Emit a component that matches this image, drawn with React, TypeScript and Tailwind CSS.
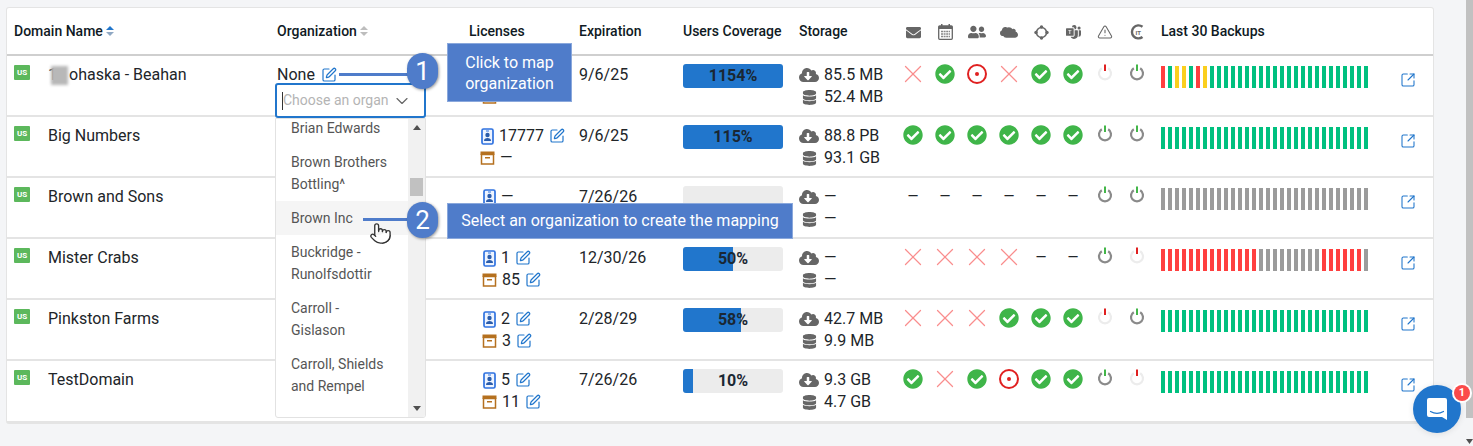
import type { ReactNode } from "react";
import { ChevronDown, Pointer, SquareArrowOutUpRight, SquarePen, TriangleAlert, X } from "lucide-react";
import { BsMicrosoftTeams } from "react-icons/bs";
import { FaCheckCircle, FaCloud, FaCloudDownloadAlt, FaDatabase, FaEnvelope, FaUserFriends } from "react-icons/fa";

const COLS = "grid grid-cols-[263px_193px_109px_104px_116px_98px_repeat(8,32px)_8px_240px_32px]";

type Status = "x" | "ok" | "target" | "-" | "on" | "off";

type Row = {
  name: ReactNode;
  org?: boolean;
  seats?: string;
  archive?: string;
  seatsEdit?: boolean;
  archiveEdit?: boolean;
  expires: string;
  coverage: number;
  coverageLabel?: string;
  down: string;
  stored: string;
  status: Status[];
  bars: string;
};

const rows: Row[] = [
  {
    name: (
      <span className="relative">
        1<span className="inline-block w-[12px]" />ohaska - Beahan
        <span className="absolute left-[3px] top-[1px] h-[19px] w-[17px] bg-[#b8b8b8] blur-[1.5px]" />
      </span>
    ),
    org: true,
    seats: "—",
    archive: "—",
    expires: "9/6/25",
    coverage: 100,
    coverageLabel: "1154%",
    down: "85.5 MB",
    stored: "52.4 MB",
    status: ["x", "ok", "target", "x", "ok", "ok", "off", "on"],
    bars: "rgyygry" + "g".repeat(23),
  },
  {
    name: "Big Numbers",
    seats: "17777",
    seatsEdit: true,
    archive: "—",
    expires: "9/6/25",
    coverage: 100,
    coverageLabel: "115%",
    down: "88.8 PB",
    stored: "93.1 GB",
    status: ["ok", "ok", "ok", "ok", "ok", "ok", "on", "on"],
    bars: "g".repeat(30),
  },
  {
    name: "Brown and Sons",
    seats: "—",
    archive: "—",
    expires: "7/26/26",
    coverage: 0,
    coverageLabel: "",
    down: "—",
    stored: "—",
    status: ["-", "-", "-", "-", "-", "-", "on", "on"],
    bars: "a".repeat(30),
  },
  {
    name: "Mister Crabs",
    seats: "1",
    seatsEdit: true,
    archive: "85",
    archiveEdit: true,
    expires: "12/30/26",
    coverage: 50,
    down: "—",
    stored: "—",
    status: ["x", "x", "x", "x", "-", "-", "on", "off"],
    bars: "r".repeat(14) + "a".repeat(9) + "r".repeat(6) + "a",
  },
  {
    name: "Pinkston Farms",
    seats: "2",
    seatsEdit: true,
    archive: "3",
    archiveEdit: true,
    expires: "2/28/29",
    coverage: 58,
    down: "42.7 MB",
    stored: "9.9 MB",
    status: ["x", "x", "x", "ok", "ok", "ok", "off", "on"],
    bars: "g".repeat(30),
  },
  {
    name: "TestDomain",
    seats: "5",
    seatsEdit: true,
    archive: "11",
    archiveEdit: true,
    expires: "7/26/26",
    coverage: 10,
    down: "9.3 GB",
    stored: "4.7 GB",
    status: ["ok", "x", "ok", "target", "ok", "ok", "on", "off"],
    bars: "g".repeat(30),
  },
];

const orgOptions = [
  { label: "Brian Edwards" },
  { label: "Brown Brothers Bottling^" },
  { label: "Brown Inc", hover: true },
  { label: "Buckridge - Runolfsdottir" },
  { label: "Carroll - Gislason" },
  { label: "Carroll, Shields and Rempel" },
];

function Edit() {
  return <SquarePen size={16} strokeWidth={1.8} className="shrink-0 text-[#2176cc]" />;
}

function Sort({ active }: { active?: boolean }) {
  return (
    <svg width="8" height="12" viewBox="0 0 8 12" className="ml-[3px]">
      <path d="M4 1 8 5H0z" fill={active ? "#2176cc" : "#bdbdbd"} />
      <path d="M4 11 8 7H0z" fill={active ? "#8fa8c4" : "#bdbdbd"} />
    </svg>
  );
}

function IdBadge() {
  return (
    <svg width="13" height="17" viewBox="0 0 13 17" className="shrink-0">
      <rect x="1" y="1" width="11" height="15" rx="1.5" fill="#eef4ff" stroke="#2f72e0" strokeWidth="1.7" />
      <circle cx="6.5" cy="7" r="2.2" fill="#2a5cab" />
      <path d="M3 13c0-2.2 1.5-3 3.500-3s3.500.8 3.500 3z" fill="#2a5cab" />
      <rect x="5" y="2.500" width="3" height="1" fill="#2f72e0" />
    </svg>
  );
}

function ArchiveBox() {
  return (
    <svg width="15" height="14" viewBox="0 0 15 14" className="-ml-[1px] shrink-0">
      <rect x="0.500" y="0.500" width="14" height="3.500" fill="#b5701f" />
      <rect x="1.500" y="3.500" width="12" height="9.500" fill="none" stroke="#b5701f" strokeWidth="1.500" />
      <rect x="5" y="6" width="5" height="1.500" fill="#b5701f" />
    </svg>
  );
}

function Power({ on }: { on: boolean }) {
  return (
    <svg width="16" height="17" viewBox="0 0 16 17">
      <path
        d="M4.800 4.300a6 6 0 1 0 6.400 0"
        fill="none"
        stroke={on ? "#8a8a8a" : "#ececec"}
        strokeWidth="2.200"
      />
      <rect x="7" y="0.500" width="2" height="6.500" fill={on ? "#43b649" : "#e02020"} />
    </svg>
  );
}

function StatusIcon({ value }: { value: Status }) {
  if (value === "ok") return <FaCheckCircle size={20} className="text-[#3fb549]" />;
  if (value === "x") return <X size={30} strokeWidth={1} className="shrink-0 text-[#f98d8d]" />;
  if (value === "target")
    return (
      <span className="flex h-[20px] w-[20px] items-center justify-center rounded-full border-2 border-[#e02020]">
        <span className="h-[4px] w-[4px] rounded-full bg-[#e02020]" />
      </span>
    );
  if (value === "-") return <span className="text-[14px] text-[#212529]">—</span>;
  return (
    <span className="-mt-[4px]">
      <Power on={value === "on"} />
    </span>
  );
}

function HeaderIcons() {
  const iconClass = "text-[#666]";
  const cell = "mt-[2px] flex justify-center";
  return (
    <>
      <span className={cell}>
        <FaEnvelope size={15} className={iconClass} />
      </span>
      <span className={cell}>
        <svg width="15" height="16" viewBox="0 0 15 16">
          <rect x="0.700" y="2" width="13.600" height="13.300" rx="1" fill="none" stroke="#666" strokeWidth="1.300" />
          <rect x="0.700" y="2" width="13.600" height="3" fill="#666" />
          <rect x="3" y="0" width="1.500" height="3" fill="#666" />
          <rect x="10.500" y="0" width="1.500" height="3" fill="#666" />
          <path d="M3 7.500h9M3 10h9M3 12.500h9" stroke="#888" strokeWidth="1.300" strokeDasharray="2 0.600" />
        </svg>
      </span>
      <span className={cell}>
        <FaUserFriends size={18} className={iconClass} />
      </span>
      <span className={cell}>
        <span className="relative h-[15px] w-[18px]">
          <FaCloud size={13} className="absolute left-0 top-0 text-[#666]" />
          <FaCloud size={15} className="absolute right-0 bottom-0 text-[#666]" />
        </span>
      </span>
      <span className={cell}>
        <svg width="15" height="15" viewBox="0 0 15 15">
          <circle cx="7.500" cy="7.500" r="5" fill="none" stroke="#666" strokeWidth="1.500" />
          <circle cx="7.500" cy="2" r="1.700" fill="#666" />
          <circle cx="7.500" cy="13" r="1.700" fill="#666" />
          <circle cx="2" cy="7.500" r="1.700" fill="#666" />
          <circle cx="13" cy="7.500" r="1.700" fill="#666" />
        </svg>
      </span>
      <span className={cell}>
        <BsMicrosoftTeams size={15} className={iconClass} />
      </span>
      <span className={cell}>
        <TriangleAlert size={16} strokeWidth={1.6} className={iconClass} />
      </span>
      <span className={cell}>
        <svg width="15" height="16" viewBox="0 0 15 16">
          <path d="M12.500 2.800A6.500 6.500 0 1 0 12.500 13" fill="none" stroke="#666" strokeWidth="2.400" />
          <text x="5.500" y="10.500" fontSize="6" fontWeight="700" fill="#666" fontFamily="Roboto, sans-serif">
            IT
          </text>
        </svg>
      </span>
    </>
  );
}

function Bars({ pattern }: { pattern: string }) {
  const tone: Record<string, string> = {
    g: "bg-[#00c07f]",
    r: "bg-[#ff3f3f]",
    y: "bg-[#fbcf1e]",
    a: "bg-[#9b9b9b]",
  };
  return (
    <div className="flex gap-[3px] pt-[2px]">
      {pattern.split("").map((c, i) => (
        <span key={i} className={`h-[22px] w-[4px] ${tone[c]}`} />
      ))}
    </div>
  );
}

function Coverage({ value, label }: { value: number; label?: string }) {
  return (
    <div className="relative h-[24px] w-[100px] overflow-hidden rounded-[3px] bg-[#ececec]">
      <div className="h-full bg-[#2176cc]" style={{ width: `${value}%` }} />
      <div className="absolute inset-0 text-center text-[16px] leading-[24px] font-bold text-[#1a2733]">
        {label ?? `${value}%`}
      </div>
    </div>
  );
}

function TableRow({ row }: { row: Row }) {
  const licenseInset = row.seats === "17777" ? "pl-[11px]" : "pl-[13px]";
  return (
    <div className={`${COLS} h-[61px] border-b-2 border-[#e4e4e4] pt-[8px] pl-[7px] text-[16px] leading-[22px] last:border-b-0`}>
      <div className="flex">
        <span className="mt-[1px] flex h-[15px] w-[16px] items-center justify-center rounded-[1px] bg-[#5cb85c] text-[8px] font-bold text-white">
          US
        </span>
        <span className="ml-[18px]">{row.name}</span>
      </div>
      <div>
        {row.org && (
          <div className="flex items-center gap-[6px]">
            None <Edit />
          </div>
        )}
      </div>
      <div className={licenseInset}>
        <div className="flex items-center gap-[5px]">
          <IdBadge />
          <span>{row.seats}</span>
          {row.seatsEdit && <Edit />}
        </div>
        <div className="flex items-center gap-[5px]">
          <ArchiveBox />
          <span>{row.archive}</span>
          {row.archiveEdit && <Edit />}
        </div>
      </div>
      <div>{row.expires}</div>
      <Coverage value={row.coverage} label={row.coverageLabel} />
      <div>
        <div className="flex items-center gap-[5px]">
          <FaCloudDownloadAlt size={20} className="shrink-0 text-[#666]" />
          <span>{row.down}</span>
        </div>
        <div className="flex items-center gap-[7px]">
          <FaDatabase size={15} className="ml-[3px] shrink-0 text-[#666]" />
          <span>{row.stored}</span>
        </div>
      </div>
      {row.status.map((s, i) => (
        <div key={i} className="flex h-[20px] items-center justify-center">
          <StatusIcon value={s} />
        </div>
      ))}
      <div />
      <Bars pattern={row.bars} />
      <div className="pt-[8px]">
        <SquareArrowOutUpRight size={16} strokeWidth={1.6} className="-ml-[1px] text-[#2176cc]" />
      </div>
    </div>
  );
}

function OrgDropdown() {
  return (
    <div className="absolute top-[83px] left-[275px] w-[151px] text-[14px]">
      <div className="flex h-[35px] items-center rounded-[3px] border-2 border-[#2176cc] bg-white pl-[5px] text-[#b4b4b4]">
        <span className="h-[18px] w-px shrink-0 bg-[#333]" />
        <span className="w-[105px] shrink-0 whitespace-nowrap">Choose an organ</span>
        <ChevronDown size={20} strokeWidth={1.4} className="ml-[4px] shrink-0 text-[#666]" />
      </div>
      <div className="relative h-[300px] overflow-hidden rounded-b-[3px] border border-[#e2e2e2] bg-white text-[#555]">
        <div className="-mt-[8px] mr-[17px]">
          {orgOptions.map((o) => (
            <div key={o.label} className={`py-[6px] pr-[12px] pl-[15px] leading-[22px] ${o.hover ? "bg-[#f5f5f5]" : ""}`}>
              {o.label}
            </div>
          ))}
        </div>
        <div className="absolute top-0 right-0 flex h-full w-[17px] flex-col items-center justify-between bg-[#f1f1f1] py-[6px]">
          <svg width="8" height="5" viewBox="0 0 8 5">
            <path d="M4 0 8 5H0z" fill="#505050" />
          </svg>
          <svg width="8" height="5" viewBox="0 0 8 5">
            <path d="M4 5 8 0H0z" fill="#505050" />
          </svg>
        </div>
        <div className="absolute top-[59px] right-[2px] h-[18px] w-[13px] bg-[#c1c1c1]" />
      </div>
    </div>
  );
}

function Callouts() {
  const badge =
    "absolute left-[407px] flex h-[36px] w-[31px] items-center justify-center rounded-full bg-[#4f7cca] text-[26px] text-white shadow-[1px_1px_3px_rgba(0,0,0,0.4)]";
  return (
    <>
      <div className="absolute top-[73px] left-[339px] h-[3px] w-[70px] bg-[#4f7cca]" />
      <div className={`${badge} top-[53px]`}>1</div>
      <div className="absolute top-[43px] left-[447px] flex h-[59px] w-[125px] items-center justify-center border border-[#8aa8dc] bg-[#4f7cca] text-center text-[16px] leading-[21px] text-white">
        Click to map
        <br />
        organization
      </div>
      <div className="absolute top-[218px] left-[363px] h-[3px] w-[46px] bg-[#4f7cca]" />
      <div className={`${badge} top-[202px]`}>2</div>
      <div className="absolute top-[203px] left-[447px] flex h-[36px] w-[346px] items-center justify-center border border-[#8aa8dc] bg-[#4f7cca] text-[16px] text-white">
        Select an organization to create the mapping
      </div>
      <Pointer size={23} strokeWidth={1.4} className="absolute top-[222px] left-[369px] fill-white text-[#333]" />
    </>
  );
}

function Chat() {
  return (
    <div className="absolute top-[385px] left-[1413px] flex h-[48px] w-[48px] items-center justify-center rounded-full bg-[#2176cc] shadow-[0_1px_6px_rgba(0,0,0,0.1)]">
      <svg width="22" height="24" viewBox="0 0 22 24">
        <path d="M3 1h16a2 2 0 0 1 2 2v20l-5-3H3a2 2 0 0 1-2-2V3a2 2 0 0 1 2-2z" fill="#fff" />
        <path d="M4.500 14.500c4 2.200 9 2.200 13 0" fill="none" stroke="#2176cc" strokeWidth="1.200" strokeLinecap="round" />
      </svg>
      <span className="absolute top-0 -right-[9px] flex h-[16px] w-[16px] items-center justify-center rounded-full bg-[#fb4a4a] text-[11px] font-bold text-white ring-2 ring-white">
        1
      </span>
    </div>
  );
}

export default function App() {
  return (
    <div className="relative h-[446px] w-[1473px] overflow-hidden bg-[#f4f5f7] font-['Roboto',sans-serif] text-[#212529]">
      <div className="flex h-full">
        <div className="flex-1 pt-[7px] pl-[6px]">
          <div className="h-[417px] w-[1428px] rounded-[3px] border-x border-t border-b-[3px] border-[#e4e4e4] bg-white">
            <div className={`${COLS} h-[48px] items-center border-b-2 border-[#cfcfcf] pl-[7px] text-[14px] font-medium text-[#0f1a24]`}>
              <div className="flex items-center">
                Domain Name
                <Sort active />
              </div>
              <div className="flex items-center">
                Organization
                <Sort />
              </div>
              <div className="-ml-[1px]">Licenses</div>
              <div>Expiration</div>
              <div>Users Coverage</div>
              <div>Storage</div>
              <HeaderIcons />
              <div />
              <div>Last 30 Backups</div>
              <div />
            </div>
            {rows.map((row, i) => (
              <TableRow key={i} row={row} />
            ))}
          </div>
        </div>
        <div className="flex w-[7px] flex-col justify-between">
          <div className="h-[418px] w-full bg-[#c1c1c1]" />
          <svg width="7" height="5" viewBox="0 0 7 5" className="mb-[2px]">
            <path d="M0 0h7L3.500 5z" fill="#505050" />
          </svg>
        </div>
      </div>
      <OrgDropdown />
      <Callouts />
      <Chat />
    </div>
  );
}
